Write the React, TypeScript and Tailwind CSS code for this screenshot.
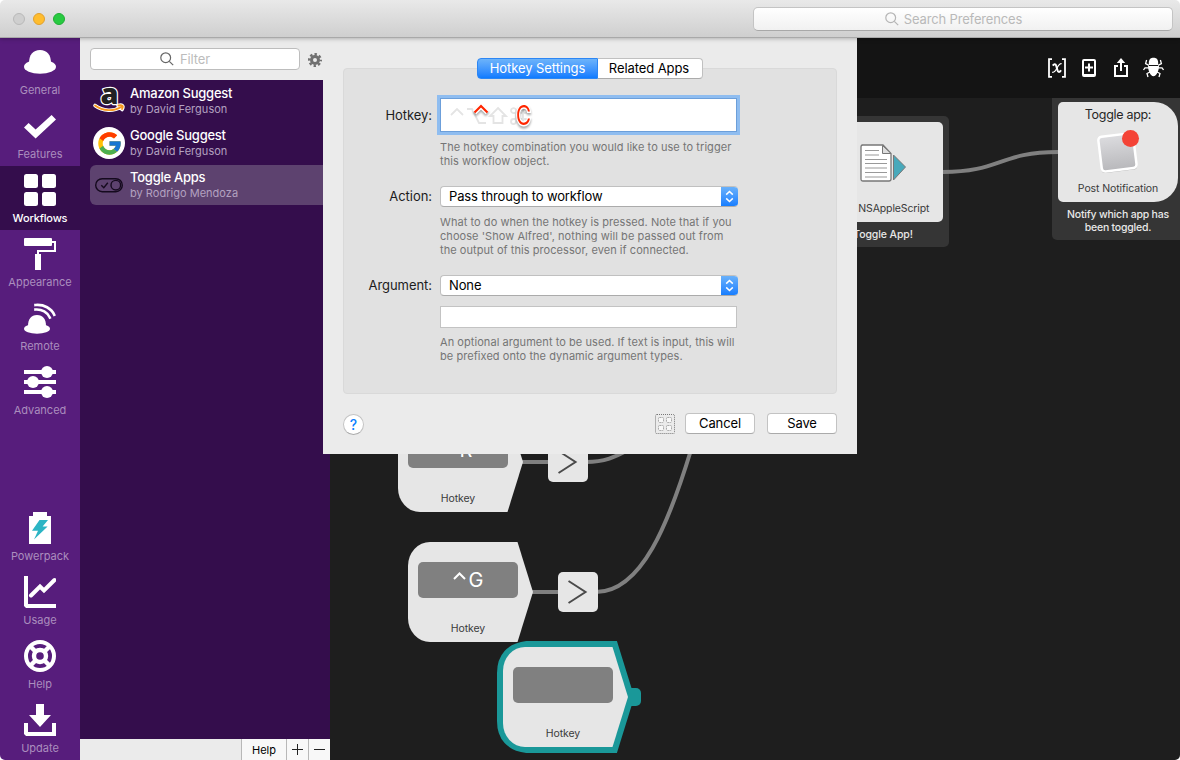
import type { ReactNode } from 'react';
import { FcGoogle } from 'react-icons/fc';

interface NavItem {
  label: string;
  icon: ReactNode;
}

const topNav: NavItem[] = [
  {
    label: 'General',
    icon: (
      <>
        <path d="M5 17 C5 9 9 4 16 4 S27 9 27 17 V21 H5 Z" />
        <ellipse cx="16" cy="20.8" rx="16" ry="7" />
      </>
    ),
  },
  {
    label: 'Features',
    icon: <path d="M0 17.5 L4.6 13 L11.6 19.6 L27.6 5 L32 9.6 L11.6 28.6 Z" />,
  },
  {
    label: 'Workflows',
    icon: (
      <>
        <rect width="14" height="14" rx="2.5" />
        <rect x="18" width="14" height="14" rx="2.5" />
        <rect y="18" width="14" height="14" rx="2.5" />
        <rect x="18" y="18" width="14" height="14" rx="2.5" />
      </>
    ),
  },
  {
    label: 'Appearance',
    icon: (
      <>
        <rect width="28" height="8" rx="1" />
        <rect x="11" y="16" width="6" height="16" />
        <path d="M28 4 H31 V13 H14 V17" fill="none" stroke="currentColor" strokeWidth="2" />
      </>
    ),
  },
  {
    label: 'Remote',
    icon: (
      <>
        <path d="M4 24 C4 17 7 13 13 13 S22 17 22 24 Z" />
        <ellipse cx="13" cy="26.8" rx="13" ry="5" />
        <path d="M11.5 7.5 C18 7 23.5 10.5 25.8 15.5 M11.5 3 C20 2.2 27.5 6.5 30.2 12.8" fill="none" stroke="currentColor" strokeWidth="2.6" strokeLinecap="square" />
      </>
    ),
  },
  {
    label: 'Advanced',
    icon: (
      <>
        <path d="M0 6 H32 M0 16 H32 M0 26 H32" stroke="currentColor" strokeWidth="4" />
        <circle cx="23" cy="6" r="6" />
        <circle cx="9" cy="16" r="6" />
        <circle cx="23" cy="26" r="6" />
      </>
    ),
  },
];

const bottomNav: NavItem[] = [
  {
    label: 'Powerpack',
    icon: (
      <>
        <path d="M9 0 H23 V4 H27 V32 H5 V4 H9 Z" />
        <path d="M15.5 8 H24 L18.6 14.4 H23.6 L10 27.5 L14 18.8 H8 Z" fill="#2cb5c4" />
      </>
    ),
  },
  {
    label: 'Usage',
    icon: (
      <>
        <path d="M0 0 H4 V28 H32 V32 H2 L0 30 Z" />
        <path d="M7 19.5 L16 10.5 L20 14.5 L30.5 4" fill="none" stroke="currentColor" strokeWidth="4" strokeLinecap="round" />
      </>
    ),
  },
  {
    label: 'Help',
    icon: (
      <g fill="none" stroke="currentColor">
        <circle cx="16" cy="16" r="14" strokeWidth="4" />
        <circle cx="16" cy="16" r="6" strokeWidth="4.4" />
        <path d="M6 6 L12 12 M26 6 L20 12 M6 26 L12 20 M26 26 L20 20" strokeWidth="4.5" />
      </g>
    ),
  },
  {
    label: 'Update',
    icon: (
      <>
        <path d="M12 0 H20 V11 H27 L16 23 L5 11 H12 Z" />
        <path d="M0 19 H4 V28 H28 V19 H32 V32 H2 L0 30 Z" />
      </>
    ),
  },
];

const NavButton = ({ item, active = false }: { item: NavItem; active?: boolean }) => (
  <div className={`flex h-16 shrink-0 flex-col items-center pt-2 ${active ? 'bg-[#340d4c]' : ''}`}>
    <svg width="32" height="32" viewBox="0 0 32 32" className="text-white" fill="currentColor">{item.icon}</svg>
    <span className={`mt-1 text-[11px] leading-4 ${active ? 'font-medium tracking-[-0.15px] text-white' : 'text-[#ab8ebe]'}`}>{item.label}</span>
  </div>
);

const SearchIcon = ({ color }: { color: string }) => (
  <svg width="14" height="14" viewBox="0 0 14 14" fill="none" stroke={color} strokeWidth="1.2">
    <circle cx="5.7" cy="5.7" r="4.9" />
    <path d="M9.3 9.3 L13.2 13.2" />
  </svg>
);

const AmazonIcon = () => (
  <svg width="32" height="32" viewBox="0 0 32 32" className="overflow-visible">
    <text x="16.5" y="18.5" textAnchor="middle" fontFamily="Open Sans, sans-serif" fontWeight="800" fontSize="29" fill="#222" stroke="#fff" strokeWidth="2.4" paintOrder="stroke" strokeLinejoin="round">a</text>
    <path d="M2 20.5 C10 26.5 21 26.5 28 22 M25 20.5 C29 19.5 31.3 20.5 29 24.5" fill="none" stroke="#fff" strokeWidth="3.6" strokeLinecap="round" />
    <path d="M2 20.5 C10 26.5 21 26.5 28 22 M25.5 20.5 C29 19.7 31 20.7 29 24" fill="none" stroke="#f7981d" strokeWidth="1.8" strokeLinecap="round" />
  </svg>
);

const ToggleIcon = () => (
  <svg width="32" height="32" viewBox="0 0 32 32" fill="none" stroke="#150a1e" strokeWidth="1.4">
    <rect x="2.7" y="9.7" width="26.6" height="13" rx="6.5" />
    <circle cx="22.8" cy="16.2" r="4.8" />
    <path d="M8.3 16.2 L10.8 18.7 L14.8 13.7" />
  </svg>
);

const GoogleIcon = () => (
  <div className="flex size-8 items-center justify-center rounded-full bg-white">
    <FcGoogle size={27} />
  </div>
);

const workflows = [
  { name: 'Amazon Suggest', author: 'by David Ferguson', icon: <AmazonIcon /> },
  { name: 'Google Suggest', author: 'by David Ferguson', icon: <GoogleIcon /> },
  { name: 'Toggle Apps', author: 'by Rodrigo Mendoza', icon: <ToggleIcon />, selected: true },
];

const TitleBar = () => (
  <header className="relative z-20 flex h-[38px] shrink-0 items-center justify-between border-b border-[#a9a9a9] bg-linear-to-b from-[#e9e9e9] to-[#cfcfcf] pr-[7px] pl-[13px] shadow-[0_1px_4px_rgba(0,0,0,0.25)]">
    <div className="flex gap-2">
      <span className="size-3 rounded-full border border-[#b9b9b9] bg-[#cfcfcf]" />
      <span className="size-3 rounded-full border border-[#e0a02f] bg-[#ffbd2e]" />
      <span className="size-3 rounded-full border border-[#1fad34] bg-[#28ca41]" />
    </div>
    <div className="flex h-6 w-[420px] items-center justify-center gap-[5px] rounded-[5px] border border-[#c4c4c4] border-b-[#a8a8a8] bg-linear-to-b from-white to-[#f1f1f1] pr-[19px] text-[13px] text-[#b9b9b9]">
      <SearchIcon color="#b5b5b5" />
      <span className="mt-0.5 tracking-[-0.15px]">Search Preferences</span>
    </div>
  </header>
);

const WorkflowList = () => (
  <div className="flex w-[250px] shrink-0 flex-col bg-[#340d4c]">
    <div className="flex h-[42px] shrink-0 items-center gap-2 bg-[#ebebeb] pl-2.5">
      <div className="flex h-[22px] w-[210px] items-center justify-center gap-1.5 rounded-[4px] border border-[#bdbdbd] bg-white pr-5 text-[13px] text-[#bcbcbc]">
        <SearchIcon color="#666" />
        <span className="mt-0.5 tracking-[-0.1px]">Filter</span>
      </div>
      <svg width="14" height="14" viewBox="0 0 14 14" fill="none" stroke="#707070" className="mt-0.5">
        <circle cx="7" cy="7" r="3.5" strokeWidth="3" />
        <circle cx="7" cy="7" r="5.8" strokeWidth="2.4" strokeDasharray="2.4 2.155" strokeDashoffset="1.2" />
      </svg>
    </div>
    <div className="flex flex-1 flex-col gap-0.5 pt-px pl-2.5">
      {workflows.map((w) => (
        <div key={w.name} className={`flex h-10 items-center gap-[5px] pl-[3px] ${w.selected ? 'rounded-l-[6px] bg-[#5d426f]' : ''}`}>
          {w.icon}
          <div className="flex flex-col">
            <span className="-mt-px text-[13px] leading-4 font-medium tracking-[-0.25px] text-white">{w.name}</span>
            <span className="text-[11px] leading-4 tracking-[0.02px] text-[#b3a1c0]">{w.author}</span>
          </div>
        </div>
      ))}
    </div>
    <div className="flex h-[21px] shrink-0 justify-end bg-[#ebebeb] text-black">
      <span className="flex w-[45px] items-center justify-center border-l border-[#b8b8b8] bg-[#f8f8f8] pt-0.5 text-[11px]">Help</span>
      <span className="flex w-[22px] items-center justify-center border-l border-[#b8b8b8] bg-[#f8f8f8]">
        <svg width="11" height="11" viewBox="0 0 11 11" stroke="#222"><path d="M0 5.5 H11 M5.5 0 V11" /></svg>
      </span>
      <span className="flex w-[22px] items-center justify-center border-l border-[#b8b8b8] bg-[#f8f8f8]">
        <svg width="11" height="11" viewBox="0 0 11 11" stroke="#222"><path d="M0 5.5 H11" /></svg>
      </span>
    </div>
  </div>
);

const CanvasToolbar = () => (
  <div className="flex h-[60px] shrink-0 items-center justify-end gap-[10px] bg-[#141414] pr-4 text-white">
    <svg width="22" height="22" viewBox="0 0 22 22" fill="none" stroke="currentColor" strokeWidth="1.8">
      <path d="M6 2.2 H3 V19.8 H6 M16 2.2 H19 V19.8 H16" />
      <path d="M6.8 8.6 C8.2 6.6 9.8 6.8 10.3 9 L11.4 13 C12 15.6 13.6 15.6 15 13.2" strokeWidth="2" />
      <path d="M15.6 6.6 C13.4 6.2 12.2 8.6 11 11 S8.4 15.8 6.2 15.2" strokeWidth="1.2" />
    </svg>
    <svg width="22" height="22" viewBox="0 0 22 22" fill="none" stroke="currentColor" strokeWidth="2">
      <rect x="5" y="3" width="12" height="16" rx="1" />
      <path d="M7 10.5 H15 M11 6.5 V14.5 M5 18 H17" />
    </svg>
    <svg width="22" height="22" viewBox="0 0 22 22" fill="none" stroke="currentColor" strokeWidth="2">
      <path d="M8 9 H5 V19 H17 V9 H14 M11 14 V5" />
      <path d="M11 1 L15.2 6 H6.8 Z" fill="currentColor" stroke="none" />
    </svg>
    <svg width="22" height="22" viewBox="0 0 22 22" fill="none" stroke="currentColor" strokeWidth="1.3">
      <path d="M8.5 1.4 C9.5 0.4 13.5 0.4 14.5 1.4 C16.2 3 16.6 5.5 15.9 7.9 H7.1 C6.4 5.5 6.8 3 8.5 1.4 Z M6 9 H17 C17 13.5 14.5 19.2 11.5 19.2 S6 13.5 6 9 Z" fill="currentColor" stroke="none" />
      <path d="M7 8.4 L3.6 6.6 L4.6 3 M16 8.4 L19.4 6.6 L18.4 3 M7 10.8 H3 L1.5 13 M16 10.8 H20 L21.5 13 M8 15 L5 16.5 L6 20 M15 15 L18 16.5 L17 20" />
    </svg>
  </div>
);

const Junction = ({ className }: { className: string }) => (
  <div className={`absolute flex size-10 items-center justify-center rounded-[5px] bg-[#e6e6e6] ${className}`}>
    <svg width="20" height="24" viewBox="0 0 20 24" fill="none" stroke="#4a4a4a" strokeWidth="2">
      <path d="M0.5 1 L17.5 12 L0.5 23" />
    </svg>
  </div>
);

const HotkeyNode = ({ letter, className, selected = false }: { letter?: string; className: string; selected?: boolean }) => (
  <div className={`absolute h-[100px] w-[125px] ${className}`}>
    <svg width="125" height="100" viewBox="0 0 125 100" className="absolute inset-0 overflow-visible">
      {selected && (
        <>
          <path d="M24 0 H109.5 L125 50 L109.5 100 H24 Q0 97 0 74 V26 Q0 3 24 0 Z" fill="none" stroke="#1a9899" strokeWidth="12" />
          <rect x="122" y="41" width="16" height="18" rx="5" fill="#1a9899" />
        </>
      )}
      <path d="M22 0 H109.5 L125 50 L109.5 100 H22 A22 24 0 0 1 0 76 V24 A22 24 0 0 1 22 0 Z" fill="#e6e6e6" />
    </svg>
    <div className="relative flex w-[120px] flex-col items-center pt-5">
      <div className="flex h-9 w-[100px] items-center justify-center gap-0.5 rounded-[5px] bg-[#808080] text-[20px] text-white">
        {letter && (
          <>
            <svg width="13" height="20" viewBox="0 0 13 20" fill="none" stroke="currentColor" strokeWidth="2">
              <path d="M1 9 L6.5 3.5 L12 9" />
            </svg>
            <span className="tracking-[-0.8px]">{letter}</span>
          </>
        )}
      </div>
      <span className="mt-[23px] text-[10.5px] leading-4 tracking-[-0.1px] text-[#3a3a3a]">Hotkey</span>
    </div>
  </div>
);

const Canvas = () => (
  <div className="relative flex-1 overflow-hidden bg-[#1e1e1e]">
    <div className="absolute top-[18px] left-[487px] h-[131px] w-[132px] rounded-[5px] bg-[#353535]" />
    <div className="absolute -top-1.5 left-[722px] h-[148px] w-[132px] rounded-[5px] bg-[#353535]" />
    <svg width="850" height="662" viewBox="330 98 850 662" fill="none" stroke="#808080" strokeWidth="4" className="absolute inset-0">
      <path d="M943 172 C1000 172 1000 152 1058 152" />
      <path d="M520 462 H550 M586 462 C605 462 615 457 628 450" />
      <path d="M530 592 H560 M596 592 C642 592 669 522 691 450" />
    </svg>

    <div className="absolute top-[24px] left-[493px] flex h-[100px] w-[120px] flex-col items-center rounded-[5px] bg-[#e6e6e6] pt-[22px]">
      <svg width="46" height="40" viewBox="0 0 46 40" className="shrink-0" fill="none">
        <path d="M1.5 1 H23 L31 9.5 V35 Q31 37 29 37 H3 Q1 37 1 35 V3 Q1 1 3 1 Z" fill="#fff" stroke="#777" strokeWidth="1.3" />
        <path d="M22.5 1.5 V9.5 H31 Z" fill="#ddd" stroke="#777" />
        <path d="M5 6.5 H19 M5 11 H19 M5 15.5 H27 M5 19.5 H27 M5 24 H27 M5 28.5 H27 M5 33 H27" stroke="#999" strokeWidth="1.2" />
        <path d="M33.5 11 L45.5 23 L33.5 36 Z" fill="#48a9bb" stroke="#777" />
      </svg>
      <span className="mt-[17px] text-[10.5px] leading-4 tracking-[-0.13px] text-[#3a3a3a]">Run NSAppleScript</span>
      <span className="mt-2.5 text-[10.5px] leading-4 font-medium tracking-[-0.1px] text-[#e8e8e8]">Toggle App!</span>
    </div>

    <div className="absolute top-[4px] left-[728px] flex h-[100px] w-[120px] flex-col items-center rounded-l-[5px] rounded-r-[24px] bg-[#e6e6e6] pt-[5px]">
      <span className="text-[12.5px] leading-4 tracking-[-0.3px] text-[#262626]">Toggle app:</span>
      <svg width="46" height="48" viewBox="0 0 46 48" className="mt-1 shrink-0">
        <defs>
          <linearGradient id="note" x1="0" y1="0" x2="0" y2="1">
            <stop offset="0" stopColor="#dcdcdf" />
            <stop offset="1" stopColor="#b8b8bb" />
          </linearGradient>
        </defs>
        <rect x="4.5" y="8.5" width="36" height="36" rx="4" fill="#b0b0b0" transform="rotate(-7 22 26)" />
        <rect x="5" y="8" width="35" height="35" rx="3.5" fill="url(#note)" stroke="#fff" strokeWidth="2.5" transform="rotate(-7 22 26)" />
        <circle cx="35.5" cy="11.5" r="8.5" fill="#f44336" />
      </svg>
      <span className="mt-1.5 text-[10.5px] leading-4 tracking-[-0.1px] text-[#3a3a3a]">Post Notification</span>
      <span className="mt-[11px] text-center text-[10.5px] leading-[13px] font-medium tracking-[-0.2px] whitespace-nowrap text-[#e8e8e8]">
        Notify which app has
        <br />
        been toggled.
      </span>
    </div>

    <HotkeyNode letter="R" className="top-[314px] left-[68px]" />
    <Junction className="top-[344px] left-[218px]" />
    <HotkeyNode letter="G" className="top-[444px] left-[78px]" />
    <Junction className="top-[474px] left-[228px]" />
    <HotkeyNode className="top-[549px] left-[173px]" selected />
  </div>
);

const SelectBox = ({ value }: { value: string }) => (
  <div className="flex h-[21px] w-[298px] overflow-hidden rounded-[4px] border border-r-0 border-[#c0c0c0] border-b-[#ababab] bg-white pl-2">
    <span className="flex-1 text-[13px] leading-[19px] tracking-[-0.13px] text-black">{value}</span>
    <span className="-my-px flex w-[17px] items-center justify-center bg-linear-to-b from-[#6cb3fa] to-[#0c7bff]">
      <svg width="9" height="13" viewBox="0 0 9 13" fill="none" stroke="#fff" strokeWidth="1.5">
        <path d="M1.2 4.6 L4.5 1.5 L7.8 4.6 M1.2 8.4 L4.5 11.5 L7.8 8.4" />
      </svg>
    </span>
  </div>
);

const Field = ({ label, height, help, children }: { label: string; height: string; help: string[]; children: ReactNode }) => (
  <div className="flex gap-2">
    <div className={`flex w-[88px] shrink-0 items-center justify-end pt-px text-[13px] tracking-[-0.05px] text-[#1c1c1c] ${height}`}>{label}</div>
    <div>
      {children}
      <p className="mt-2 text-[11px] leading-[14px] tracking-[0.06px] whitespace-nowrap text-[#757575]">
        {help.map((line) => (
          <span key={line} className="block">{line}</span>
        ))}
      </p>
    </div>
  </div>
);

const HotkeySheet = () => (
  <div className="absolute top-[38px] left-[323px] z-10 flex h-[416px] w-[534px] flex-col bg-[#ebebeb] px-5 pt-5">
    <div className="relative z-10 flex h-[21px] shrink-0 justify-center text-[13px] tracking-[-0.08px]">
      <span className="w-[121px] rounded-l-[4px] border border-[#2c86f4] bg-linear-to-b from-[#6cb3fa] to-[#0c7bff] text-center leading-[19px] text-white">Hotkey Settings</span>
      <span className="w-[105px] rounded-r-[4px] border border-l-0 border-[#c0c0c0] border-b-[#ababab] bg-white pr-0.5 text-center leading-[19px] text-black">Related Apps</span>
    </div>
    <div className="-mt-[11px] h-[326px] shrink-0 rounded-[4px] border border-[#d9d9d9] bg-[#e1e1e1] pt-[29px]">
      <Field label="Hotkey:" height="h-[34px]" help={['The hotkey combination you would like to use to trigger', 'this workflow object.']}>
        <div className="flex h-[34px] w-[297px] items-center border border-[#6c9fda] bg-white pl-2 ring-3 ring-[#8fbdf0]">
          <svg width="90" height="30" viewBox="0 0 90 30" fill="none" stroke="#e4e4e4" strokeWidth="1.8" className="overflow-visible">
            <path d="M2 15 L8 9 L14 15" />
            <path d="M18 9 H23 L30 23 H37 M30 9 H37" />
            <path d="M49 8 L57 16 H53.5 V23 H44.5 V16 H41 Z" />
            <path d="M67 13 H74 V19 H67 Z M67 13 H65 A2.5 2.5 0 1 1 67 10.5 Z M74 13 V10.5 A2.5 2.5 0 1 1 76.5 13 Z M67 19 V21.5 A2.5 2.5 0 1 1 64.5 19 Z M74 19 H76.5 A2.5 2.5 0 1 1 74 21.5 Z" />
            <path d="M25.5 12.5 L32 6 L38.5 12.5" stroke="#fff" strokeWidth="5" className="drop-shadow-[0_2px_1px_rgba(0,0,0,0.35)]" />
            <path d="M25.5 12.5 L32 6 L38.5 12.5" stroke="#ff2600" strokeWidth="2.2" />
            <text x="74.5" y="25" textAnchor="middle" textLength="15" lengthAdjust="spacingAndGlyphs" fontFamily="Inter, sans-serif" fontSize="27" fill="#ff2600" stroke="#fff" strokeWidth="3" paintOrder="stroke" className="drop-shadow-[0_2px_1px_rgba(0,0,0,0.35)]">C</text>
          </svg>
        </div>
      </Field>
      <div className="h-[18px]" />
      <Field label="Action:" height="h-[21px]" help={['What to do when the hotkey is pressed. Note that if you', "choose 'Show Alfred', nothing will be passed out from", 'the output of this processor, even if connected.']}>
        <SelectBox value="Pass through to workflow" />
      </Field>
      <div className="h-[18px]" />
      <Field label="Argument:" height="h-[21px]" help={['An optional argument to be used. If text is input, this will', 'be prefixed onto the dynamic argument types.']}>
        <SelectBox value="None" />
        <div className="mt-2.5 -mb-px h-[22px] w-[297px] border border-[#c3c3c3] bg-white" />
      </Field>
    </div>
    <div className="mt-[19px] flex h-[21px] items-center text-[13px] text-black">
      <span className="mt-0.5 flex size-[21px] items-center justify-center rounded-full border border-[#c3c3c3] border-b-[#aaa] bg-white text-[14px] font-medium text-[#0a80ff]">?</span>
      <span className="mr-2.5 ml-auto flex size-5 items-center justify-center rounded-[2px] border border-dotted border-[#777]">
        <svg width="14" height="14" viewBox="0 0 14 14" fill="#f8f8f8" stroke="#aaa" strokeDasharray="2 0.6">
          <rect x="0.5" y="0.5" width="5" height="5" rx="1" />
          <rect x="8.5" y="0.5" width="5" height="5" rx="1" />
          <rect x="0.5" y="8.5" width="5" height="5" rx="1" />
          <rect x="8.5" y="8.5" width="5" height="5" rx="1" />
        </svg>
      </span>
      <span className="mr-3 h-[21px] w-[70px] rounded-[4px] border border-[#c3c3c3] border-b-[#aaa] bg-white text-center leading-[19px] tracking-[-0.1px]">Cancel</span>
      <span className="h-[21px] w-[70px] rounded-[4px] border border-[#c3c3c3] border-b-[#aaa] bg-white text-center leading-[19px] tracking-[-0.1px]">Save</span>
    </div>
  </div>
);

export default function App() {
  return (
    <div className="relative flex h-[760px] w-[1180px] flex-col overflow-hidden rounded-[5px] font-['Inter',sans-serif]">
      <TitleBar />
      <div className="flex min-h-0 flex-1">
        <nav className="flex w-20 shrink-0 flex-col justify-between bg-[#571d7c]">
          <div>
            {topNav.map((item) => (
              <NavButton key={item.label} item={item} active={item.label === 'Workflows'} />
            ))}
          </div>
          <div>
            {bottomNav.map((item) => (
              <NavButton key={item.label} item={item} />
            ))}
          </div>
        </nav>
        <WorkflowList />
        <main className="flex min-w-0 flex-1 flex-col">
          <CanvasToolbar />
          <Canvas />
        </main>
      </div>
      <HotkeySheet />
    </div>
  );
}
